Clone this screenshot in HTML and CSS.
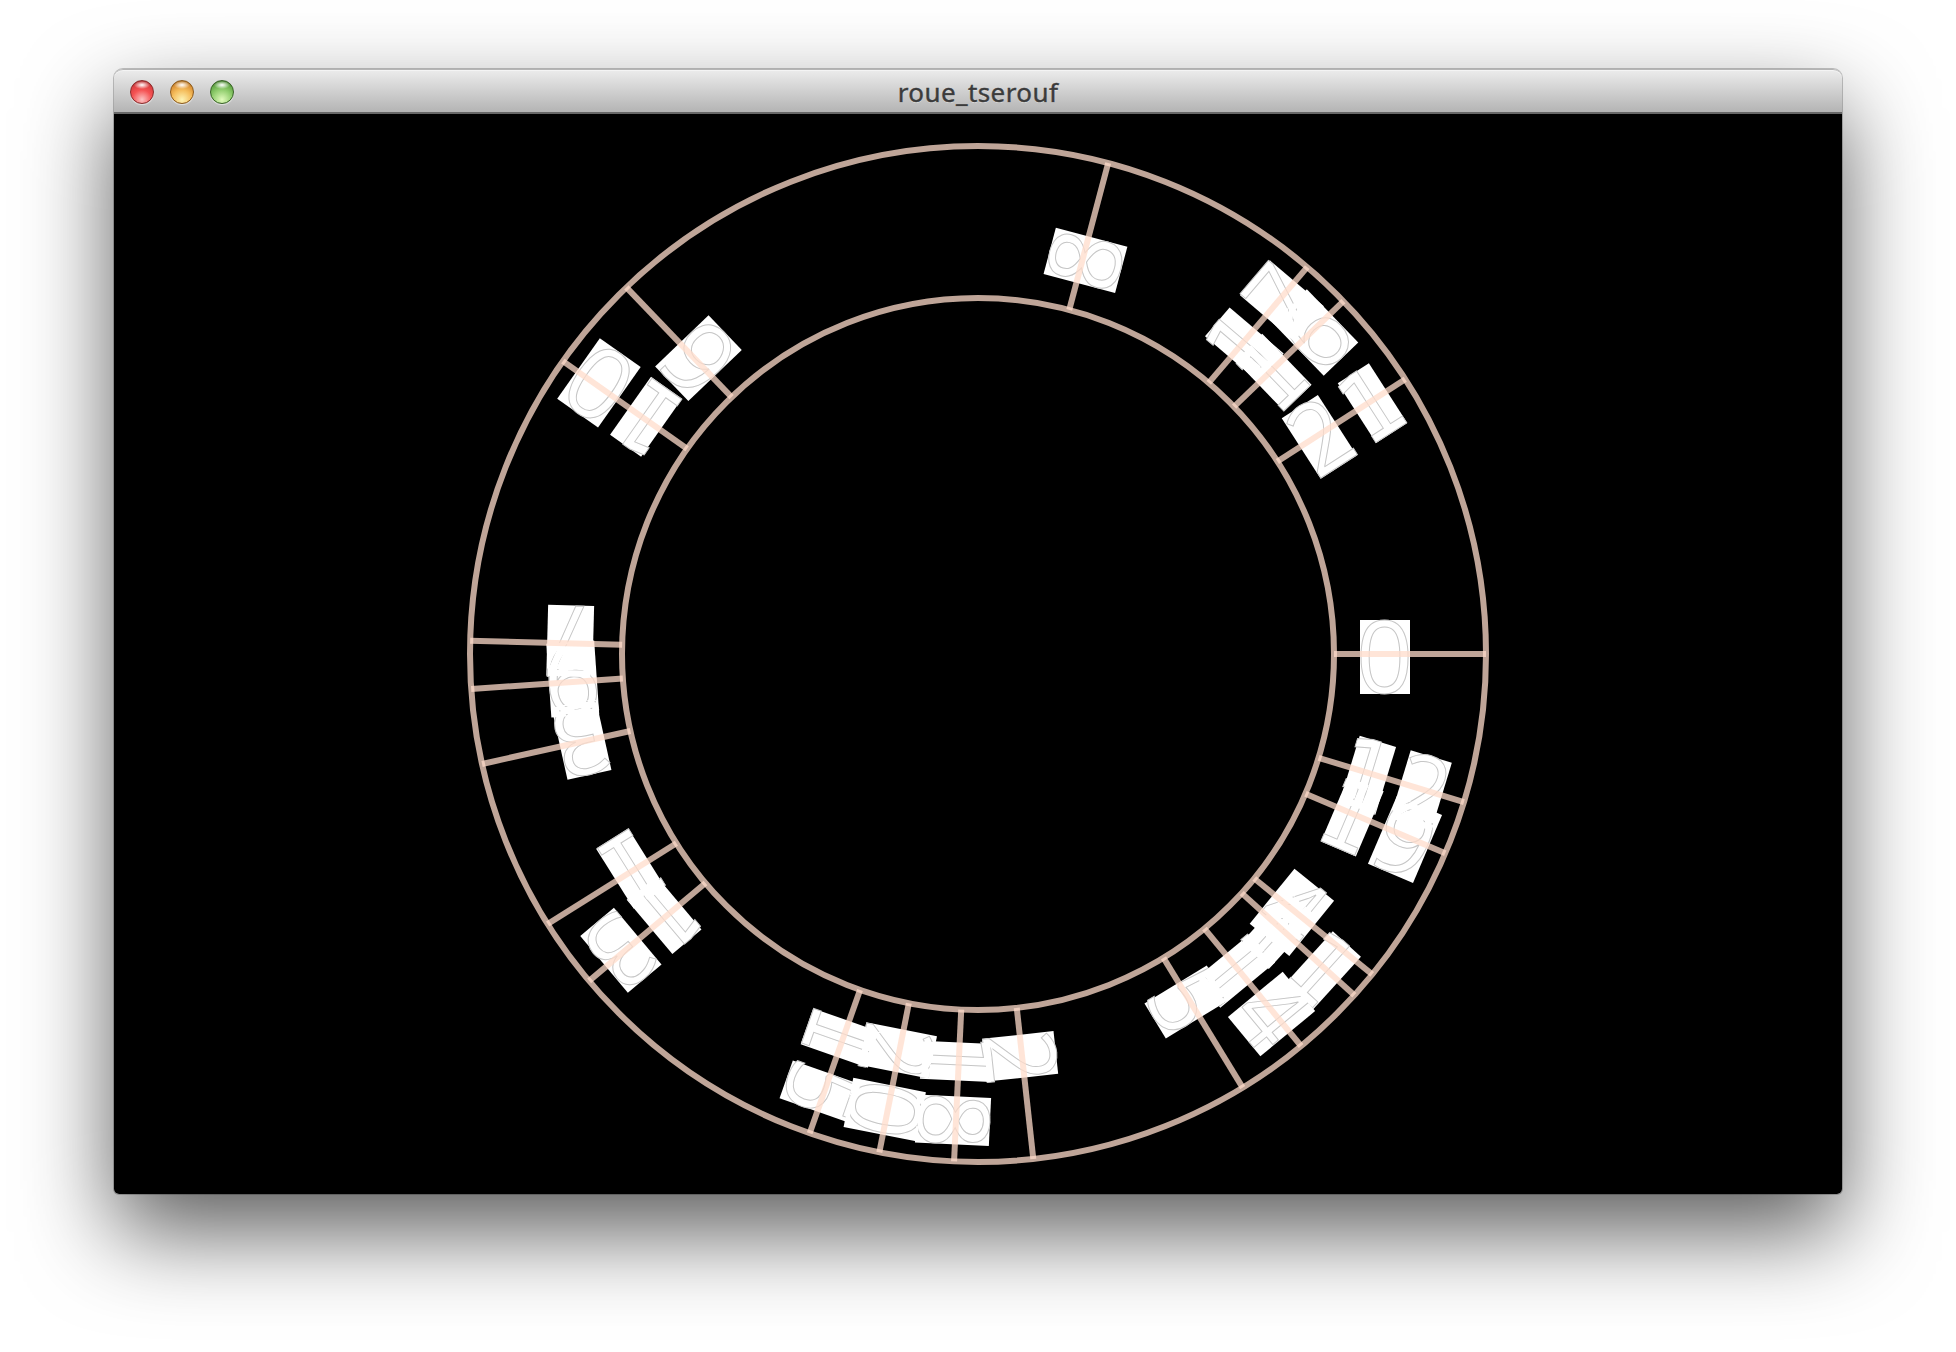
FILE: index.html
```html
<!DOCTYPE html>
<html lang="fr">
<head>
<meta charset="utf-8">
<title>roue_tserouf</title>
<link rel="stylesheet" href="styles.css">
</head>
<body>
<main class="window">
  <header class="titlebar">
    <div class="lights">
      <span class="light red"></span>
      <span class="light amber"></span>
      <span class="light green"></span>
    </div>
    <h1 class="title">roue_tserouf</h1>
  </header>
  <svg class="wheel" width="1728" height="1080" viewBox="-864 -540 1728 1080">
    <!-- one group per number; each digit is a plate with its outlined glyph -->
    <g class="plate"><rect x="382" y="-34" width="50" height="74"/><text x="378" y="38.5">0</text></g>
    <g class="plate" transform="rotate(147.9)"><rect x="389" y="-33" width="38" height="71"/><text class="one" transform="translate(378 37.5) scale(.9 1)">1</text></g>
    <g class="plate" transform="rotate(83.75)"><rect x="383" y="-34" width="43" height="72"/><text transform="translate(379 37.5) scale(.93 1)">2</text></g>
    <g class="plate" transform="rotate(167.5)"><rect x="383" y="-34" width="45" height="74"/><text x="378" y="38.5">3</text></g>
    <g class="plate" transform="rotate(39.1)"><rect x="381" y="-33" width="51" height="71"/><text transform="translate(380.5 37.5) scale(.91 1)">4</text></g>
    <g class="plate" transform="rotate(58.6)"><rect x="385" y="-33" width="41" height="73"/><text transform="translate(378 38.5) scale(.93 1)">5</text></g>
    <g class="plate" transform="rotate(226.2)"><rect x="383" y="-34" width="48" height="74"/><text x="378" y="38.5">6</text></g>
    <g class="plate" transform="rotate(181.5)"><rect x="385" y="-33" width="46" height="71"/><text transform="translate(382 37.5) scale(.92 1)">7</text></g>
    <g class="plate" transform="rotate(284.85)"><rect x="384" y="-34" width="48" height="74"/><text x="379.5" y="38.5">8</text></g>
    <g class="plate" transform="rotate(176.05)"><rect x="382" y="-34" width="48" height="74"/><text x="378" y="38.5">9</text></g>
    <g class="plate" transform="rotate(215.2)"><rect x="389" y="-33" width="38" height="71"/><rect x="441" y="-34" width="50" height="74"/><text class="one" transform="translate(378 37.5) scale(.9 1)">1</text><text x="437" y="38.5">0</text></g>
    <g class="plate" transform="rotate(42.2)"><rect x="389" y="-33" width="38" height="71"/><rect x="449" y="-33" width="38" height="71"/><text class="one" transform="translate(378 37.5) scale(.9 1)">1</text><text class="one" transform="translate(438 37.5) scale(.9 1)">1</text></g>
    <g class="plate" transform="rotate(16.95)"><rect x="389" y="-33" width="38" height="71"/><rect x="442" y="-34" width="43" height="72"/><text class="one" transform="translate(378 37.5) scale(.9 1)">1</text><text transform="translate(438 37.5) scale(.93 1)">2</text></g>
    <g class="plate" transform="rotate(139.95)"><rect x="389" y="-33" width="38" height="71"/><rect x="442" y="-34" width="44" height="74"/><text class="one" transform="translate(378 37.5) scale(.9 1)">1</text><text transform="translate(438 38.5) scale(.96 1)">3</text></g>
    <g class="plate" transform="rotate(50.5)"><rect x="389" y="-33" width="38" height="71"/><rect x="439" y="-33" width="51" height="71"/><text class="one" transform="translate(378 37.5) scale(.9 1)">1</text><text transform="translate(438.5 37.5) scale(.91 1)">4</text></g>
    <g class="plate" transform="rotate(109.35)"><rect x="389" y="-33" width="38" height="71"/><rect x="445" y="-33" width="40" height="73"/><text class="one" transform="translate(378 37.5) scale(.9 1)">1</text><text transform="translate(437.5 38.5) scale(.93 1)">5</text></g>
    <g class="plate" transform="rotate(316)"><rect x="389" y="-33" width="38" height="71"/><rect x="442" y="-34" width="48" height="74"/><text class="one" transform="translate(378 37.5) scale(.9 1)">1</text><text x="437" y="38.5">6</text></g>
    <g class="plate" transform="rotate(310.4)"><rect x="389" y="-33" width="38" height="71"/><rect x="443" y="-33" width="46" height="71"/><text class="one" transform="translate(378 37.5) scale(.9 1)">1</text><text transform="translate(440 37.5) scale(.92 1)">7</text></g>
    <g class="plate" transform="rotate(92.7)"><rect x="389" y="-33" width="38" height="71"/><rect x="443" y="-34" width="48" height="74"/><text class="one" transform="translate(378 37.5) scale(.9 1)">1</text><text x="438.5" y="38.5">8</text></g>
    <g class="plate" transform="rotate(23.1)"><rect x="389" y="-33" width="38" height="71"/><rect x="441" y="-34" width="49" height="74"/><text class="one" transform="translate(378 37.5) scale(.9 1)">1</text><text x="437" y="38.5">9</text></g>
    <g class="plate" transform="rotate(101.2)"><rect x="383" y="-34" width="43" height="72"/><rect x="440" y="-34" width="50" height="74"/><text transform="translate(379 37.5) scale(.93 1)">2</text><text x="436" y="38.5">0</text></g>
    <g class="plate" transform="rotate(327.25)"><rect x="383" y="-34" width="43" height="72"/><rect x="449" y="-33" width="37" height="71"/><text transform="translate(379 37.5) scale(.93 1)">2</text><text class="one" transform="translate(438 37.5) scale(.9 1)">1</text></g>
    <g class="lines">
      <circle r="508"/>
      <circle r="356"/>
      <path d="M356 0H508"/>
      <path d="M356 0H508" transform="rotate(16.95)"/>
      <path d="M356 0H508" transform="rotate(23.1)"/>
      <path d="M356 0H508" transform="rotate(39.1)"/>
      <path d="M356 0H508" transform="rotate(42.2)"/>
      <path d="M356 0H508" transform="rotate(50.5)"/>
      <path d="M356 0H508" transform="rotate(58.6)"/>
      <path d="M356 0H508" transform="rotate(83.75)"/>
      <path d="M356 0H508" transform="rotate(92.7)"/>
      <path d="M356 0H508" transform="rotate(101.2)"/>
      <path d="M356 0H508" transform="rotate(109.35)"/>
      <path d="M356 0H508" transform="rotate(139.95)"/>
      <path d="M356 0H508" transform="rotate(147.9)"/>
      <path d="M356 0H508" transform="rotate(167.5)"/>
      <path d="M356 0H508" transform="rotate(176.05)"/>
      <path d="M356 0H508" transform="rotate(181.5)"/>
      <path d="M356 0H508" transform="rotate(215.2)"/>
      <path d="M356 0H508" transform="rotate(226.2)"/>
      <path d="M356 0H508" transform="rotate(284.85)"/>
      <path d="M356 0H508" transform="rotate(310.4)"/>
      <path d="M356 0H508" transform="rotate(316)"/>
      <path d="M356 0H508" transform="rotate(327.25)"/>
    </g>
  </svg>
</main>
</body>
</html>
```
FILE: styles.css
```css
html,
body {
  margin: 0;
  height: 100%;
  overflow: hidden;
  background: #fff;
}

.window {
  box-sizing: border-box;
  width: 1728px;
  margin: 69px auto 0;
  border-radius: 9px 9px 5px 5px;
  box-shadow:
    0 0 0 1px rgba(0, 0, 0, .22),
    0 38px 90px rgba(0, 0, 0, .64);
}

.titlebar {
  box-sizing: border-box;
  display: grid;
  grid-template-columns: 1fr auto 1fr;
  align-items: center;
  height: 45px;
  padding: 2px 16px 0;
  border-top: 1px solid #b4b4b4;
  border-bottom: 2px solid #686868;
  border-radius: 9px 9px 0 0;
  background: linear-gradient(#ececec, #b4b4b4);
  box-shadow: inset 0 1px #f4f4f4;
}

.lights {
  display: flex;
  gap: 16px;
}

.light {
  box-sizing: border-box;
  width: 24px;
  height: 24px;
  border-radius: 50%;
  box-shadow: 0 1px 1px rgba(255, 255, 255, .6);
}

.red {
  border: 1px solid #8a2b2b;
  background:
    radial-gradient(ellipse 8px 4px at 50% 4px, #fff, rgba(255, 255, 255, 0)),
    radial-gradient(circle at 50% 85%, #fbc4c4 0, #f55354 45%, #dd4143 70%, #852020 100%);
}

.amber {
  border: 1px solid #8c5a1c;
  background:
    radial-gradient(ellipse 8px 4px at 50% 4px, #fff, rgba(255, 255, 255, 0)),
    radial-gradient(circle at 50% 85%, #fdf3b4 0, #f5bd5c 45%, #dd953a 70%, #855112 100%);
}

.green {
  border: 1px solid #386326;
  background:
    radial-gradient(ellipse 8px 4px at 50% 4px, #fff, rgba(255, 255, 255, 0)),
    radial-gradient(circle at 50% 85%, #e2fbbd 0, #93cf70 45%, #69ad4c 70%, #305c1d 100%);
}

.title {
  margin: 0;
  font: 400 26px/34px "Noto Sans", "Open Sans", sans-serif;
  letter-spacing: .4px;
  color: #3b3b3b;
  -webkit-text-stroke: .4px #3b3b3b;
  text-shadow: 0 1px rgba(255, 255, 255, .45);
}

.wheel {
  display: block;
  background: #000;
  border-radius: 0 0 5px 5px;
  isolation: isolate;
}

/* where two plates overlap the white wins and the glyph outlines vanish */
.plate {
  mix-blend-mode: lighten;
}

.plate rect {
  fill: #fff;
}

.plate text {
  font: 100px "Open Sans", sans-serif;
  fill: #fff;
  stroke: #c6c6c6;
  stroke-width: 1;
}

.plate .one {
  font: 97px "DejaVu Sans", sans-serif;
}

.lines {
  fill: none;
  stroke: rgba(255, 220, 203, .75);
  stroke-width: 6;
}
```
